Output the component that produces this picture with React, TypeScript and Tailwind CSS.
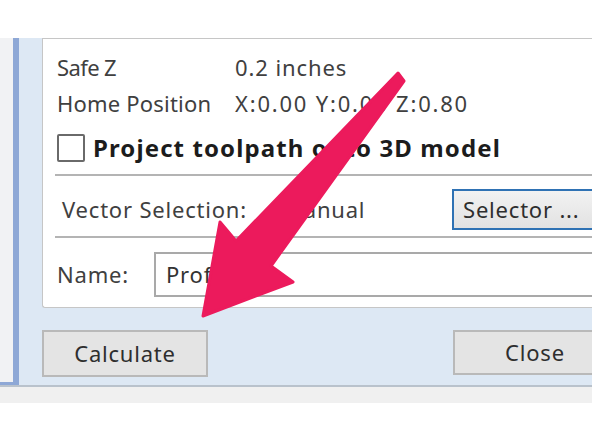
import React from 'react';

const font = { fontFamily: '"Noto Sans", "Open Sans", Arial, sans-serif' };

const Separator: React.FC = () => (
  <div className="ml-[-2px] h-[3px] border-t-2 border-[#b4b4b4] bg-white" />
);

const Arrow: React.FC = () => (
  <svg
    className="absolute left-0 top-0 pointer-events-none"
    width="592"
    height="444"
    viewBox="0 0 592 444"
  >
    <polygon
      points="398,73 404,81 271,266 293,282 203,316 220,222 236,241"
      fill="#ec1a5c"
      stroke="#ec1a5c"
      strokeWidth="3"
      strokeLinejoin="round"
    />
  </svg>
);

export default function App() {
  return (
    <div className="relative w-[592px] h-[444px] overflow-hidden bg-white" style={font}>
      <div className="h-[38px]" />
      <div className="flex h-[347px]">
        <div className="w-[19px] shrink-0 bg-[#f1f2f4] border-r-[6px] border-b-[3px] border-[#8ea8d6]" />
        <div className="flex-1 flex flex-col bg-[#dde8f4] pl-[23px]">
          <div className="h-[270px] shrink-0 bg-white border border-r-0 border-[#c6c6c6] rounded-bl-[3px] pl-[14px] pt-[10px] text-[22px] tracking-[0.8px] text-[#404040]">
            <div className="flex items-center h-[36px]">
              <span className="w-[178px] tracking-[-0.6px]">Safe Z</span>
              <span className="tracking-[0.9px]">0.2 inches</span>
            </div>
            <div className="flex items-center h-[36px]">
              <span className="w-[178px] tracking-[0.2px]">Home Position</span>
              <span className="tracking-[1.8px]">X:0.00 Y:0.00 Z:0.80</span>
            </div>
            <div className="flex items-center h-[44px] mt-[5px] gap-[8px]">
              <div className="w-[28px] h-[28px] border-2 border-[#6a6a6a] rounded-[2px] bg-white" />
              <span className="font-bold text-[24px] tracking-[1.1px] text-[#1c1c1c]">Project toolpath onto 3D model</span>
            </div>
            <div className="mt-[4px]">
              <Separator />
            </div>
            <div className="flex items-center h-[41px] mt-[12px]">
              <span className="w-[226px] pl-[5px]">Vector Selection:</span>
              <span className="flex-1">Manual</span>
              <div className="w-[140px] h-[41px] border-2 border-r-0 border-[#2f72b4] bg-gradient-to-b from-[#f2f2f2] to-[#e2e2e2] pl-[9px] flex items-center text-[#2e2e2e]">
                Selector ...
              </div>
            </div>
            <div className="mt-[6px]">
              <Separator />
            </div>
            <div className="flex items-center mt-[13px]">
              <span className="w-[97px]">Name:</span>
              <div className="flex-1 h-[45px] border-2 border-r-0 border-[#a9a9a9] bg-white flex items-center pl-[10px] text-[#333]">
                Profile 1
              </div>
            </div>
          </div>
          <div className="flex justify-between items-start pt-[22px] text-[22px] tracking-[0.8px] text-[#2e2e2e]">
            <div className="w-[166px] h-[47px] bg-[#e4e4e4] border-2 border-[#b9b9b9] flex items-center justify-center">
              Calculate
            </div>
            <div className="w-[139px] h-[45px] bg-[#e4e4e4] border-2 border-r-0 border-[#b9b9b9] flex items-center pl-[50px]">
              Close
            </div>
          </div>
        </div>
      </div>
      <div className="h-[2px] bg-[#b9c2cc]" />
      <div className="h-[16px] bg-[#f0f0f0]" />
      <Arrow />
    </div>
  );
}
